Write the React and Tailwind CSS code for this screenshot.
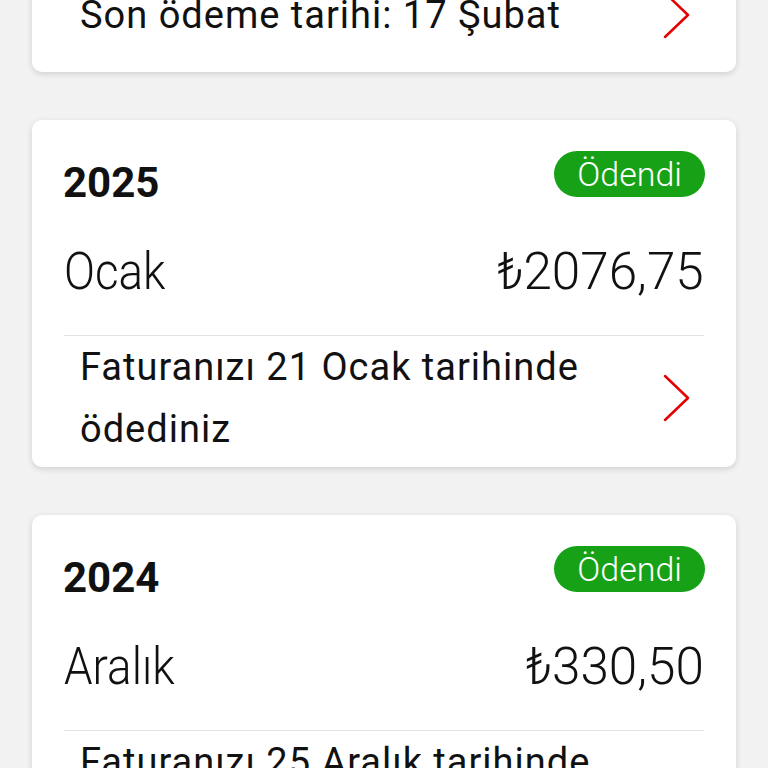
const bills = [
    { year: "2025", month: "Ocak", amount: "₺2076,75", note: "Faturanızı 21 Ocak tarihinde ödediniz" },
    { year: "2024", month: "Aralık", amount: "₺330,50", note: "Faturanızı 25 Aralık tarihinde ödediniz" },
];

function Chevron() {
    return (
        <svg width="28" height="48" viewBox="0 0 28 48" fill="none" className="shrink-0">
            <path d="M3 2 L26 24 L3 46" stroke="#e60000" strokeWidth="2.5" strokeLinecap="round" strokeLinejoin="round" />
        </svg>
    );
}

function NoteRow({ text }) {
    return (
        <div className="flex items-center pl-4 pr-[14px]">
            <p className="flex-1 pr-[50px] text-[38px] leading-[62px] tracking-[1px] text-[#111]">{text}</p>
            <Chevron />
        </div>
    );
}

function BillCard({ bill }) {
    return (
        <div className="bg-white rounded-[10px] shadow-[0_2px_6px_rgba(0,0,0,0.14)] px-8 pt-[31px] pb-[7px]">
            <div className="flex justify-between items-start">
                <h3 className="mt-[11px] -ml-[1px] text-[42px] leading-[42px] font-bold text-[#111]">{bill.year}</h3>
                <span className="h-[46px] leading-[46px] px-[23px] -mr-[1px] rounded-full bg-[#17a117] text-white text-[34px] font-light">
                    Ödendi
                </span>
            </div>
            <div className="mt-[42px] flex justify-between items-start text-[52px] leading-[52px] font-light text-[#111]">
                <span className="inline-block origin-left scale-x-[0.88]">{bill.month}</span>
                <span className="inline-block origin-right scale-x-[0.985]">{bill.amount}</span>
            </div>
            <div className="mt-[37px] h-px bg-[#e3e3e3]" />
            <NoteRow text={bill.note} />
        </div>
    );
}

export default function App() {
    return (
        <div className="min-h-screen bg-[#f2f2f2] overflow-hidden px-8 font-['Roboto',sans-serif]">
            <div className="-mt-[16px] bg-white rounded-b-[10px] shadow-[0_2px_6px_rgba(0,0,0,0.14)] pb-[26px] px-8">
                <NoteRow text="Son ödeme tarihi: 17 Şubat" />
            </div>
            <div className="mt-12 space-y-12 pb-12">
                {bills.map(b => (
                    <BillCard key={b.year} bill={b} />
                ))}
            </div>
        </div>
    );
}
